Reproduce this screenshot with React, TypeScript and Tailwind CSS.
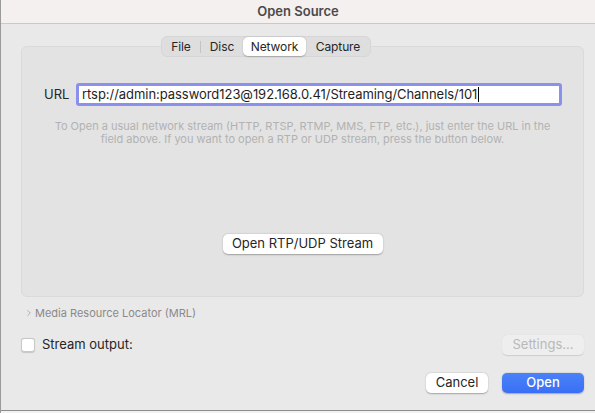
import { ChevronRight } from "lucide-react";

export default function App() {
  return (
    <div className="h-[413px] w-[595px] overflow-hidden bg-[#e9e9e9] font-['Inter',sans-serif] text-[13px] text-[#262626]">
      <div className="flex h-[413px] flex-col border-l border-[#9a9a9a]">
        {/* title bar */}
        <div className="flex h-[24px] shrink-0 items-center justify-center border-b border-[#c9c9c9] bg-[#f5f0f0]">
          <span className="text-[13px] font-semibold text-[#4a4a4a]">Open Source</span>
        </div>

        <div className="relative flex flex-1 flex-col pl-[20px] pr-[11px]">
          {/* tabs */}
          <div className="absolute left-[160px] top-[12px] z-10 flex h-[21px] w-[210px] items-center rounded-[6px] border border-[#d6d6d6] bg-[#dedede] text-[12px] tracking-[-0.1px] text-[#262626]">
            <span className="w-[38px] text-center">File</span>
            <span className="h-[12px] w-px bg-[#c4c4c4]" />
            <span className="w-[42px] text-center">Disc</span>
            <span className="flex h-[19px] w-[63px] items-center justify-center rounded-[5px] bg-white shadow-[0_0.5px_1.5px_rgba(0,0,0,0.25)]">Network</span>
            <span className="w-[64px] text-center">Capture</span>
          </div>

          {/* panel */}
          <div className="mt-[22px] flex h-[251px] flex-col rounded-[6px] border border-[#dadada] bg-[#e3e3e3]">
            <div className="mt-[36px] flex items-center">
              <span className="ml-[22px] w-[32px] text-[13px]">URL</span>
              <div className="flex h-[23px] w-[486px] items-center rounded-[3px] border-[3px] border-[#8a90ec] bg-white pl-[3px]">
                <span className="text-[13px] tracking-[-0.05px] text-[#1f1f1f]">rtsp://admin:password123@192.168.0.41/Streaming/Channels/101</span>
                <span className="ml-px h-[15px] w-px bg-black" />
              </div>
            </div>
            <p className="mx-auto mt-[14px] w-[520px] text-center text-[11px] leading-[13px] text-[#b2b2b2]">
              To Open a usual network stream (HTTP, RTSP, RTMP, MMS, FTP, etc.), just enter the URL in the
              <br />
              field above. If you want to open a RTP or UDP stream, press the button below.
            </p>
            <div className="mt-[88px] flex justify-center">
              <button className="h-[20px] w-[160px] rounded-[5px] bg-white text-[13px] text-[#262626] shadow-[0_0.5px_1.5px_rgba(0,0,0,0.3)]">
                Open RTP/UDP Stream
              </button>
            </div>
          </div>

          <div className="mt-[8px] flex items-center text-[11px] text-[#8a8a8a]">
            <ChevronRight size={10} strokeWidth={1.5} className="ml-[3px]" />
            <span className="ml-[1px]">Media Resource Locator (MRL)</span>
          </div>

          <div className="mt-[13px] flex items-center">
            <span className="h-[14px] w-[14px] rounded-[3px] border border-[#c8c8c8] bg-white shadow-[0_0.5px_1px_rgba(0,0,0,0.15)]" />
            <span className="ml-[7px] text-[13px]">Stream output:</span>
            <button className="ml-auto h-[20px] w-[82px] rounded-[5px] bg-[#eeeeee] text-[13px] text-[#b9b9b9] shadow-[0_0.5px_1px_rgba(0,0,0,0.12)]">
              Settings...
            </button>
          </div>

          <div className="mt-[18px] flex justify-end gap-[14px]">
            <button className="h-[20px] w-[62px] rounded-[5px] bg-white text-[13px] text-[#262626] shadow-[0_0.5px_1.5px_rgba(0,0,0,0.3)]">
              Cancel
            </button>
            <button className="h-[20px] w-[82px] rounded-[5px] bg-gradient-to-b from-[#4a82f8] to-[#3a6ff5] text-[13px] font-medium text-white shadow-[0_0.5px_1.5px_rgba(0,0,0,0.3)]">
              Open
            </button>
          </div>
        </div>

        <div className="h-[3px] shrink-0 border-t border-[#8c8c8c] bg-[#f2f2f2]" />
      </div>
    </div>
  );
}
